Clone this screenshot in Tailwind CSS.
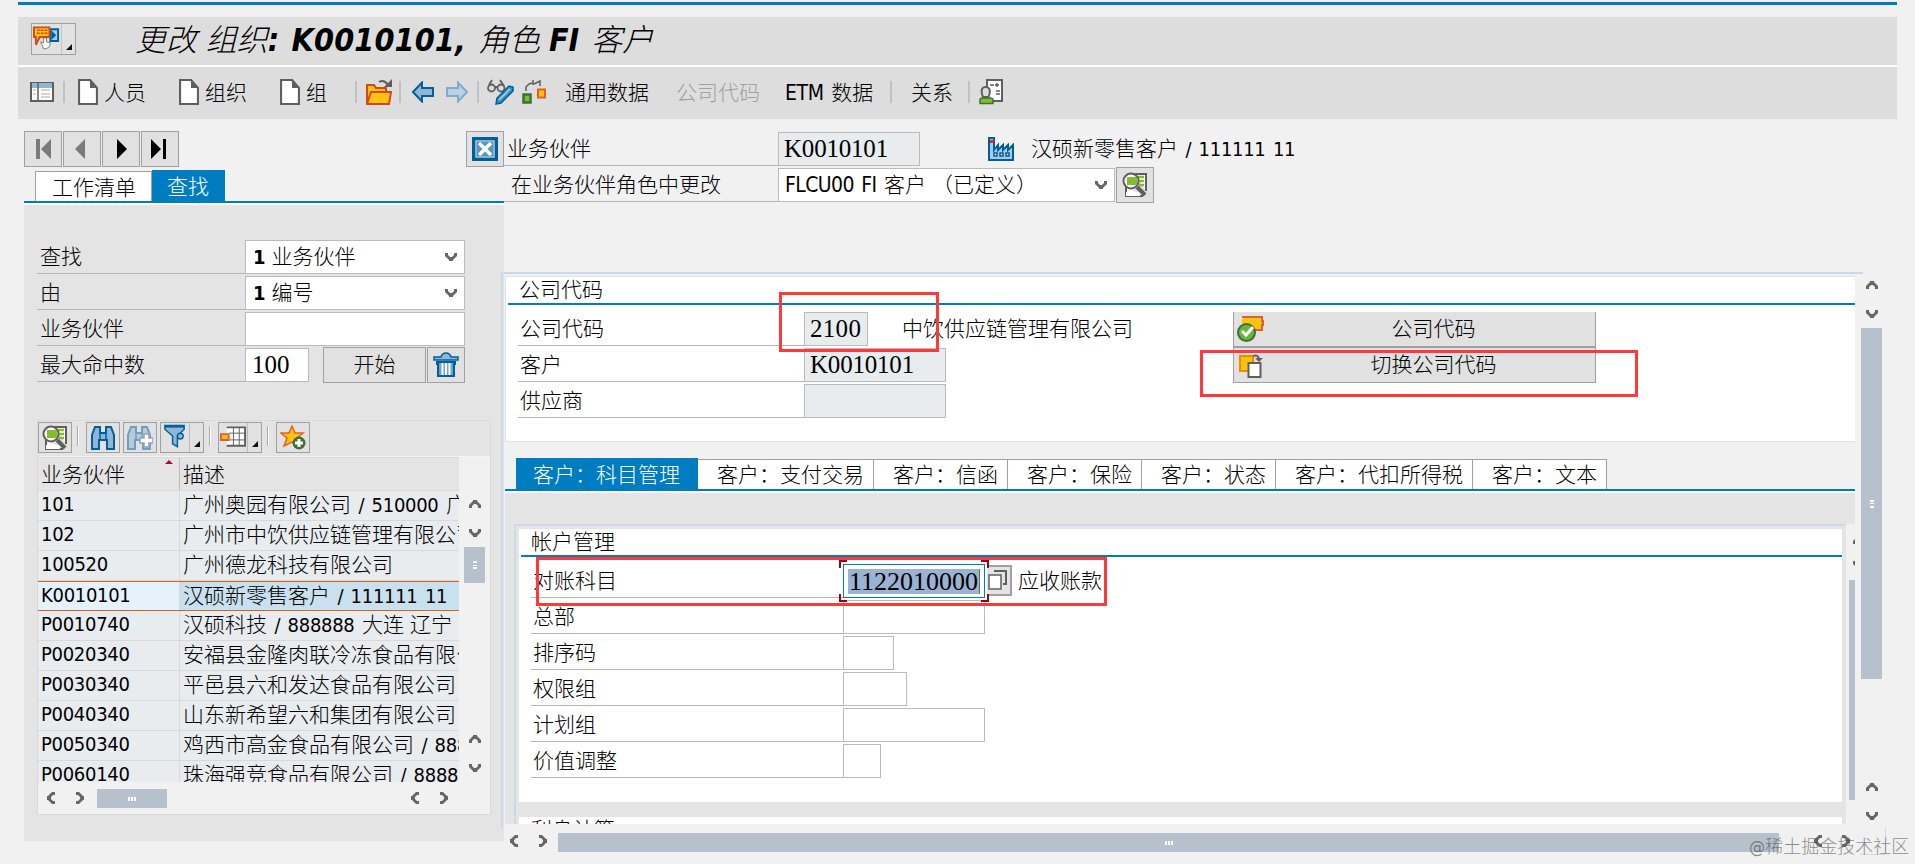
<!DOCTYPE html>
<html lang="zh-CN">
<head>
    <meta charset="UTF-8">
    <meta name="viewport" content="width=device-width, initial-scale=1.0">
    <title>更改 组织: K0010101</title>
    <script src="https://cdn.jsdelivr.net/npm/@tailwindcss/browser@4"></script>
</head>
<body class="relative w-[1915px] h-[864px] overflow-hidden bg-[#f1f1f1] text-black text-[21px] leading-none whitespace-nowrap font-light font-['DejaVu_Sans_Condensed','Noto_Sans_CJK_SC',sans-serif]">

<!-- icons -->
<svg class="hidden">
    <symbol id="up" viewBox="0 0 12 8"><path d="M0 8V5l4-4V0h4v1l4 4v3H9V6L7 4H5L3 6v2z" fill="#666"/></symbol>
    <symbol id="down" viewBox="0 0 12 8"><path d="M0 0v3l4 4v1h4V7l4-4V0H9v2L7 4H5L3 2V0z" fill="#666"/></symbol>
    <symbol id="left" viewBox="0 0 8 12"><path d="M8 0H5L1 4H0v4h1l4 4h3V9H6L4 7V5l2-2h2z" fill="#666"/></symbol>
    <symbol id="right" viewBox="0 0 8 12"><path d="M0 0h3l4 4h1v4H7l-4 4H0V9h2l2-2V5L2 3H0z" fill="#666"/></symbol>
    <symbol id="corner" viewBox="0 0 6 6"><path d="M6 0v6H0z" fill="#111"/></symbol>
    <symbol id="doc" viewBox="0 0 20 26"><path d="M1 1h11l7 8v16H1z" fill="#fff" stroke="#5f5f5f" stroke-width="2.200"/><path d="M12 1v8h7z" fill="#5f5f5f"/></symbol>
    <symbol id="detail" viewBox="0 0 26 26">
        <path d="M13 2h11v17M4 15v9h17" fill="#fff" stroke="#5f5f5f" stroke-width="2"/>
        <path d="M4 20h14v4H4z" fill="#fff"/>
        <path d="M16 5h6M17 9h5M17 13h5" stroke="#84bd2c" stroke-width="2.500"/>
        <circle cx="9" cy="9" r="7.500" fill="#fff" stroke="#5f5f5f" stroke-width="2"/>
        <path d="M5 5h10v8H5z" fill="#84bd2c"/>
        <path d="M15 15l8 8" stroke="#5f5f5f" stroke-width="4"/>
    </symbol>
    <symbol id="binoc" viewBox="0 0 24 26"><path d="M4 2h5v6h6V2h5l3 8v14h-7V15H8v9H1V10z" fill="#91b5d6" stroke="#00609a" stroke-width="2"/><path d="M9 8v7M15 8v7" stroke="#00609a" stroke-width="1.500"/></symbol>
</svg>

<div class="h-[5px] pt-0.5"><div class="ml-[18px] w-[1879px] h-[3px] bg-[#007cc0]"></div></div>

<!-- title bar -->
<div class="mt-3 ml-[18px] w-[1879px] h-12 bg-[#ddd] flex pt-1.5 pl-[13px]">
    <div class="flex w-[45px] h-8 border border-[#a0a0a0] bg-[#e1e1e1]">
        <svg class="w-[30px] h-[30px] border-r border-[#c4c4c4]" viewBox="0 0 30 30">
            <path d="M19 5h8v12h-8z" fill="#a9cae6" stroke="#005f96" stroke-width="2"/>
            <path d="M20 6l5 5-5 5z" fill="#005f96"/>
            <path d="M2 3h16v10H8l-4 8v-8H2z" fill="#ffc20e" stroke="#d4481c" stroke-width="2"/>
            <path d="M5 6h11M5 9h11" stroke="#d4481c" stroke-width="1.500" stroke-dasharray="3 1"/>
            <path d="M9 18l3 1v-5h3v4l4 1-1 4-3 2h-3z" fill="#fff" stroke="#777"/>
        </svg>
        <svg class="w-1.5 h-1.5 ml-1 mt-5"><use href="#corner"/></svg>
    </div>
    <h1 class="ml-[59px] text-[31px] leading-[34px] font-light italic">更改 组织<span class="font-bold text-[32px] tracking-[0.1px] [word-spacing:2px]">: K0010101, </span>角色 <span class="font-bold text-[32px] [word-spacing:2px]">FI </span>客户</h1>
</div>
<div class="ml-[18px] w-[1879px] h-0.5 bg-white"></div>

<!-- toolbar -->
<div class="relative ml-[18px] w-[1879px] h-[52px] bg-[#ddd] flex items-center pb-0.5 pl-3">
    <svg class="w-6 h-5" viewBox="0 0 24 20"><path d="M1 1h22v18H1z" fill="#fff" stroke="#5f5f5f" stroke-width="2"/><path d="M2 1h20v5H2z" fill="#91b5d6"/><path d="M8 1v18" stroke="#5f5f5f" stroke-width="1.500"/><path d="M3 8h3M3 12h3M11 8h9M11 12h9M11 15h9" stroke="#aaa"/></svg>
    <div class="ml-[9px] w-0.5 h-[22px] bg-[#c1c1c1]"></div>
    <svg class="ml-[13px] w-5 h-[26px]"><use href="#doc"/></svg>
    <span class="ml-1.5 mt-0.5 w-[75px]">人员</span>
    <svg class="w-5 h-[26px]"><use href="#doc"/></svg>
    <span class="ml-1.5 mt-0.5 w-[75px]">组织</span>
    <svg class="w-5 h-[26px]"><use href="#doc"/></svg>
    <span class="ml-1.5 mt-0.5 w-[49px]">组</span>
    <div class="w-0.5 h-[22px] bg-[#c1c1c1]"></div>
    <svg class="ml-[9px] w-[26px] h-[26px]" viewBox="0 0 26 26"><path d="M1 25V6h7l2 3h10v4" fill="#ffc20e" stroke="#d4481c" stroke-width="2"/><path d="M1 25l4-12h20l-2 12z" fill="#ffc20e" stroke="#d4481c" stroke-width="2"/><path d="M13 3q5-3 9 3" fill="none" stroke="#5f5f5f" stroke-width="2"/><path d="M26 0v8h-8z" fill="#5f5f5f"/></svg>
    <div class="ml-[7px] w-0.5 h-[22px] bg-[#c1c1c1]"></div>
    <svg class="ml-[11px] w-[22px] h-[22px]" viewBox="0 0 22 22"><path d="M1 11L10 1.500V7h11v8H10v5.500z" fill="#91b5d6" stroke="#00609a" stroke-width="2"/></svg>
    <svg class="ml-3 w-[22px] h-[22px]" viewBox="0 0 22 22"><path d="M21 11L12 1.500V7H1v8h11v5.500z" fill="#bcd2e4" stroke="#7eacca" stroke-width="2"/></svg>
    <div class="ml-[9px] w-0.5 h-[22px] bg-[#c1c1c1]"></div>
    <svg class="ml-2 w-[27px] h-[26px]" viewBox="0 0 27 26"><g fill="none" stroke="#5f5f5f" stroke-width="1.800"><circle cx="4.500" cy="9" r="3.500"/><circle cx="14" cy="9" r="3.500"/><path d="M2 6l3-5M13 1l4 6M8 8h3"/></g><path d="M9 25l1-6L22 7l4 1v4L14 24z" fill="#3e8cc0" stroke="#00609a" stroke-width="1.500"/><path d="M12 21L23 10" stroke="#b9d6ec" stroke-width="1.500"/></svg>
    <svg class="ml-2 w-6 h-[26px]" viewBox="0 0 24 26"><path d="M1.500 15.500h7v8h-7z" fill="#84bd2c" stroke="#3a7236" stroke-width="2.500"/><path d="M16 10.500h7v8h-7z" fill="#ffc20e" stroke="#e0622a" stroke-width="2"/><path d="M4 12V8q3-4 7-4M11 1v5M12 5l6-3v5" fill="none" stroke="#5f5f5f" stroke-width="1.500"/></svg>
    <span class="ml-[19px] mt-0.5 w-[111px]">通用数据</span>
    <span class="mt-0.5 w-[109px] text-[#a0a0a0]">公司代码</span>
    <span class="mt-0.5 w-[105px]"><span class="text-[21px] font-normal tracking-[-0.4px] [word-spacing:2px]">ETM </span>数据</span>
    <div class="w-0.5 h-[22px] bg-[#c1c1c1]"></div>
    <span class="ml-[19px] mt-0.5 w-[57px]">关系</span>
    <div class="w-0.5 h-[22px] bg-[#c1c1c1]"></div>
    <svg class="ml-[9px] w-6 h-[26px]" viewBox="0 0 24 26"><path d="M8 1h15v21H8z" fill="#fff" stroke="#5f5f5f" stroke-width="2"/><path d="M11 6h4M18 4v4M16 6h4M17 12h4M17 15h4" stroke="#5f5f5f" stroke-width="1.500"/><path d="M6.500 8c4 0 5 3 4 7l-1 3H4l-1-3c-1-4 0-7 3.500-7z" fill="#ddd" stroke="#5f5f5f" stroke-width="2"/><path d="M1 24.500V21q0-2 3-2h7q3 0 3 2v3.500z" fill="#84bd2c" stroke="#3a7236" stroke-width="1.500"/></svg>
</div>

<div class="flex">
    <!-- left pane -->
    <div class="ml-6 w-[480px] shrink-0">
        <div class="flex gap-[1px] pt-3">
            <div class="w-[38px] h-9 border border-[#a0a0a0] bg-[#e1e1e1] flex items-center justify-center"><svg class="w-[15px] h-5" viewBox="0 0 15 20"><path d="M0 0h4v20H0zM15 0v20L5 10z" fill="#7a7a7a"/></svg></div>
            <div class="w-[38px] h-9 border border-[#a0a0a0] bg-[#e1e1e1] flex items-center justify-center"><svg class="w-2.5 h-5 mr-1" viewBox="0 0 10 20"><path d="M10 0v20L0 10z" fill="#7a7a7a"/></svg></div>
            <div class="w-[38px] h-9 border border-[#a0a0a0] bg-[#e1e1e1] flex items-center justify-center"><svg class="w-2.5 h-5 ml-0.5" viewBox="0 0 10 20"><path d="M0 0v20l10-10z"/></svg></div>
            <div class="w-[38px] h-9 border border-[#a0a0a0] bg-[#e1e1e1] flex items-center justify-center"><svg class="w-[15px] h-5 mr-1" viewBox="0 0 15 20"><path d="M12 0h3v20h-3zM0 0v20l10-10z"/></svg></div>
            <div class="ml-auto w-[38px] h-9 border border-[#a0a0a0] bg-[#e1e1e1] flex items-center justify-center">
                <svg class="w-[26px] h-6" viewBox="0 0 26 24"><path d="M1.500 1.500h23v21h-23z" fill="#5c96c0" stroke="#005f96" stroke-width="3"/><path d="M4 4h18v16H4z" fill="none" stroke="#a9cae6"/><path d="M7 6l12 12M19 6L7 18" stroke="#fff" stroke-width="3.500"/></svg>
            </div>
        </div>
        <div class="flex h-9 pt-[3px] pl-[11px] border-b-2 border-[#007cc0]">
            <div class="w-[117px] mt-px border border-b-0 border-[#a0a0a0] bg-white pt-1.5 pl-4">工作清单</div>
            <div class="w-[73px] bg-[#007cc0] text-white pt-[7px] pl-[15px]">查找</div>
        </div>
        <div class="h-[638px] border-t-2 border-white bg-[#e4e4e4] pt-[35px] pl-[13px]">
            <!-- search form -->
            <div class="w-[428px] flex flex-col gap-0.5">
                <div class="flex h-[34px]">
                    <div class="w-[208px] border-b border-[#b5b5b5] pt-[7px] pl-[3px]">查找</div>
                    <div class="w-[220px] border border-[#bbb] bg-white flex items-center justify-between pl-[7px] pr-[7px]"><span><span class="text-[20px] font-bold">1</span> 业务伙伴</span><svg class="w-3 h-2"><use href="#down"/></svg></div>
                </div>
                <div class="flex h-[34px]">
                    <div class="w-[208px] border-b border-[#b5b5b5] pt-[7px] pl-[3px]">由</div>
                    <div class="w-[220px] border border-[#bbb] bg-white flex items-center justify-between pl-[7px] pr-[7px]"><span><span class="text-[20px] font-bold">1</span> 编号</span><svg class="w-3 h-2"><use href="#down"/></svg></div>
                </div>
                <div class="flex h-[34px]">
                    <div class="w-[208px] border-b border-[#b5b5b5] pt-[7px] pl-[3px]">业务伙伴</div>
                    <div class="w-[220px] border border-[#bbb] bg-white"></div>
                </div>
                <div class="flex h-[34px]">
                    <div class="w-[208px] border-b border-[#b5b5b5] pt-[7px] pl-[3px]">最大命中数</div>
                    <div class="w-16 border border-[#bbb] bg-white pl-1.5 pt-[3px] text-[25px] font-['Liberation_Serif',serif]">100</div>
                    <div class="ml-3.5 -mt-px w-[103px] h-9 border border-[#a0a0a0] bg-[#e1e1e1] flex items-center justify-center">开始</div>
                    <div class="ml-px -mt-px w-[38px] h-9 border border-[#a0a0a0] bg-[#e1e1e1] flex items-center justify-center">
                        <svg class="w-[26px] h-[26px]" viewBox="0 0 26 26"><path d="M1 8V5h7q1-4 5-4t5 4h7v3z" fill="#91b5d6" stroke="#00609a" stroke-width="1.500"/><path d="M3 9h20v4h-1v12H4V13H3z" fill="#00609a"/><path d="M6 11h14v12H6z" fill="#6fa3cb"/><path d="M9.500 11v12M13 11v12M16.500 11v12" stroke="#fff" stroke-width="2"/></svg>
                    </div>
                </div>
            </div>

            <!-- result list -->
            <div class="mt-[38px] w-[454px] h-[395px] border border-[#d9d9d9]">
                <div class="flex h-9 pt-px items-start border-b border-[#f4f4f4]">
                    <div class="w-[34px] h-[31px] border border-[#a0a0a0] bg-[#e1e1e1] flex items-center justify-center"><svg class="w-[26px] h-[26px]"><use href="#detail"/></svg></div>
                    <div class="mt-1 ml-[5px] w-0.5 h-5 border-l border-[#aaa] bg-white"></div>
                    <div class="ml-[7px] w-[34px] h-[31px] border border-[#a0a0a0] bg-[#e1e1e1] flex items-center justify-center"><svg class="w-6 h-[26px]"><use href="#binoc"/></svg></div>
                    <div class="ml-[3px] w-[34px] h-[31px] border border-[#a0a0a0] bg-[#e1e1e1] flex items-center justify-center">
                        <svg class="w-[26px] h-[26px]" viewBox="0 0 26 26"><g opacity=".5"><use href="#binoc" width="24" height="26"/></g><path d="M17 9h5v4h4v5h-4v4h-5v-4h-4v-5h4z" fill="#fff" stroke="#8ea3bd" stroke-width="1.500"/></svg>
                    </div>
                    <div class="ml-[3px] w-11 h-[31px] border border-[#a0a0a0] bg-[#e1e1e1] flex items-center">
                        <svg class="w-[29px] h-[29px] border-r border-[#bbb]" viewBox="0 0 29 29"><path d="M4 2h20v4l-7 7v11l-5-3v-8L4 6z" fill="#91b5d6" stroke="#00609a" stroke-width="1.500"/><path d="M4 3h20" stroke="#00609a" stroke-width="2.500"/><circle cx="20" cy="13" r="3" fill="#91b5d6" stroke="#00609a" stroke-width="1.500"/></svg>
                        <svg class="w-1.5 h-1.5 ml-1 mt-3"><use href="#corner"/></svg>
                    </div>
                    <div class="mt-1 ml-[5px] w-0.5 h-5 border-l border-[#aaa] bg-white"></div>
                    <div class="ml-[7px] w-11 h-[31px] border border-[#a0a0a0] bg-[#e1e1e1] flex items-center">
                        <svg class="w-[29px] h-[29px] border-r border-[#bbb]" viewBox="0 0 29 29"><path d="M8 4h19v19H8z" fill="#fff"/><path d="M8 4h19v19H8" fill="none" stroke="#5f5f5f" stroke-width="2"/><path d="M10 10h17M10 17h17M15 4v19M21 4v19" stroke="#5f5f5f" stroke-width="1"/><path d="M2 11h8v6H2z" fill="#ffc20e" stroke="#e0622a" stroke-width="2"/></svg>
                        <svg class="w-1.5 h-1.5 ml-1 mt-3"><use href="#corner"/></svg>
                    </div>
                    <div class="mt-1 ml-[5px] w-0.5 h-5 border-l border-[#aaa] bg-white"></div>
                    <div class="ml-[7px] w-[34px] h-[31px] border border-[#a0a0a0] bg-[#e1e1e1] flex items-center justify-center">
                        <svg class="w-[26px] h-[26px]" viewBox="0 0 26 26"><path d="M12 1l3 7h8l-6 5 2 8-7-4-8 4 3-8-6-5h8z" fill="#ffc20e" stroke="#e0622a" stroke-width="1.500"/><circle cx="19" cy="18" r="6.500" fill="#3a7236"/><path d="M19 14v8M15 18h8" stroke="#fff" stroke-width="3"/></svg>
                    </div>
                </div>
                <div class="flex">
                    <div class="relative w-[421px] h-[325px] overflow-hidden">
                        <div class="flex h-[34px] border-y border-[#d9d9d9]">
                            <div class="relative w-[142px] border-r border-[#bbb] pt-[7px] pl-[3px]">业务伙伴<div class="absolute right-1.5 top-0.5 w-2 h-1 bg-[#c0003c] [clip-path:polygon(50%_0,100%_100%,0_100%)]"></div></div>
                            <div class="pt-[7px] pl-[3px]">描述</div>
                        </div>
                        <div id="rows"></div>
                    </div>
                    <div class="grow flex flex-col items-center h-[325px] bg-[#f1f1f1]">
                        <svg class="w-3 h-2 mt-[43px] shrink-0"><use href="#up"/></svg>
                        <svg class="w-3 h-2 mt-[21px] shrink-0"><use href="#down"/></svg>
                        <div class="mt-2.5 w-[21px] h-9 bg-[#b7c1cb] flex items-center justify-center shrink-0"><div class="w-1 h-2 border-y-2 border-white flex items-center"><div class="w-1 h-px bg-white"></div></div></div>
                        <svg class="w-3 h-2 mt-[152px] shrink-0"><use href="#up"/></svg>
                        <svg class="w-3 h-2 mt-[21px] shrink-0"><use href="#down"/></svg>
                    </div>
                </div>
                <div class="flex items-center h-8 bg-[#f1f1f1] pl-[9px] pb-px">
                    <svg class="w-2 h-3"><use href="#left"/></svg>
                    <svg class="w-2 h-3 ml-[21px]"><use href="#right"/></svg>
                    <div class="ml-[13px] w-[70px] h-[19px] mt-0.5 bg-[#b7c1cb] flex items-center justify-center gap-px"><i class="w-0.5 h-1 bg-white"></i><i class="w-0.5 h-1 bg-white"></i><i class="w-0.5 h-1 bg-white"></i></div>
                    <svg class="w-2 h-3 ml-[244px]"><use href="#left"/></svg>
                    <svg class="w-2 h-3 ml-[21px]"><use href="#right"/></svg>
                </div>
            </div>
        </div>
    </div>

    <!-- right pane -->
    <div class="w-[1411px] shrink-0 -ml-[3px]">
        <div class="h-[153px] pt-[13px] pl-[3px]">
            <div class="flex h-[34px]">
                <div class="w-[274px] border-b border-[#b5b5b5] pt-[7px] pl-[3px]">业务伙伴</div>
                <div class="w-[142px] border border-[#bbb] bg-[#e8ecef] pl-[5px] pt-[3px] text-[25px] tracking-[-0.2px] font-['Liberation_Serif',serif]">K0010101</div>
                <svg class="ml-[68px] mt-[5px] w-[27px] h-6" viewBox="0 0 27 24"><path d="M1 23V1h5v12l4-5v5l5-5v5l5-5v5l5-5v15z" fill="#a9cae6" stroke="#005f96" stroke-width="2"/><path d="M2 3h4v3H2z" fill="#e22"/><path d="M6 16h3v3H6zM12 16h3v3h-3zM18 16h3v3h-3z" fill="#fff" stroke="#005f96" stroke-width="1.500"/></svg>
                <div class="ml-4 pt-[7px]">汉硕新零售客户<span class="text-[20px] font-normal tracking-[-0.3px] [word-spacing:2px]"> / 111111 11</span></div>
            </div>
            <div class="flex h-[34px] mt-0.5">
                <div class="w-[274px] border-b border-[#b5b5b5] pt-[7px] pl-[7px]">在业务伙伴角色中更改</div>
                <div class="w-[337px] border border-[#bbb] bg-white flex items-center justify-between pl-1.5 pr-[7px]"><span><span class="text-[21px] font-normal tracking-[-0.6px] [word-spacing:2px]">FLCU00 FI </span>客户 （已定义）</span><svg class="w-3 h-2"><use href="#down"/></svg></div>
                <div class="ml-px -mt-px w-[38px] h-9 border border-[#a0a0a0] bg-[#e1e1e1] flex items-center justify-center"><svg class="w-[26px] h-[26px]"><use href="#detail"/></svg></div>
            </div>
        </div>

        <div class="flex">
            <div class="w-[1362px] h-[556px] border-t-2 border-l-2 border-[#cbdaea] pt-0.5 pl-0.5">
                <div class="w-[1350px] h-[166px] bg-white border border-[#e2e2e2] border-r-0">
                    <div class="ml-0.5 h-7 pl-[11px] pt-[3px] border-b-2 border-[#007cc0]">公司代码</div>
                    <div class="flex pl-3 pt-[7px]">
                        <div class="w-[712px] flex flex-col gap-0.5">
                            <div class="flex h-[34px]">
                                <div class="w-[286px] border-b border-[#b5b5b5] pt-[7px] pl-0.5">公司代码</div>
                                <div class="w-16 border border-[#bbb] bg-[#e8ecef] pl-[5px] pt-[3px] text-[25px] tracking-[0.3px] font-['Liberation_Serif',serif]">2100</div>
                                <div class="pt-[7px] ml-[34px]">中饮供应链管理有限公司</div>
                            </div>
                            <div class="flex h-[34px]">
                                <div class="w-[286px] border-b border-[#b5b5b5] pt-[7px] pl-0.5">客户</div>
                                <div class="w-[142px] border border-[#bbb] bg-[#e8ecef] pl-[5px] pt-[3px] text-[25px] tracking-[-0.2px] font-['Liberation_Serif',serif]">K0010101</div>
                            </div>
                            <div class="flex h-[34px]">
                                <div class="w-[286px] border-b border-[#b5b5b5] pt-[7px] pl-0.5">供应商</div>
                                <div class="w-[142px] border border-[#bbb] bg-[#e8ecef]"></div>
                            </div>
                        </div>
                        <div class="ml-[3px] w-[363px] h-[71px] border border-t-0 border-[#a0a0a0] bg-[#e1e1e1]">
                            <div class="relative flex h-9 items-center justify-center pl-[38px] border-b-2 border-[#a0a0a0]">
                                <svg class="absolute left-[3px] top-1 w-[27px] h-[26px]" viewBox="0 0 27 26"><path d="M5 1h20v4h1v4h-1v5h-9" fill="#ffc20e" stroke="#e0622a" stroke-width="2"/><path d="M5 3h19v10H5z" fill="#ffc20e"/><ellipse cx="9.500" cy="16.500" rx="8.500" ry="8.500" fill="#6db33f" stroke="#3a7236" stroke-width="2"/><path d="M5 15l4 4 7-8" fill="none" stroke="#fff" stroke-width="3"/></svg>
                                公司代码
                            </div>
                            <div class="relative flex h-[34px] items-center justify-center pl-[38px]">
                                <svg class="absolute left-[5px] top-1.5 w-6 h-6" viewBox="0 0 24 24"><path d="M1 2h13v15H1z" fill="#ffc20e" stroke="#f08a00" stroke-width="2"/><path d="M14 2q6-2 6 4" fill="none" stroke="#5f5f5f" stroke-width="2"/><path d="M16 4h8l-4 4z" fill="#5f5f5f"/><path d="M9.500 9h12v14h-12z" fill="#fff" stroke="#5f5f5f" stroke-width="2"/></svg>
                                切换公司代码
                            </div>
                        </div>
                    </div>
                </div>

                <!-- customer tabs -->
                <div class="mt-4 w-[1350px] h-[33px] flex pl-[11px] border-b-2 border-[#007cc0] bg-[#f1f1f1]">
                    <div class="w-[182px] bg-[#007cc0] text-white pt-[7px] pl-[17px]">客户：科目管理</div>
                    <div class="w-[176px] mt-px border-t border-r border-[#a0a0a0] bg-white pt-[5px] pl-[19px]">客户：支付交易</div>
                    <div class="w-[134px] mt-px border-t border-r border-[#a0a0a0] bg-white pt-[5px] pl-[19px]">客户：信函</div>
                    <div class="w-[134px] mt-px border-t border-r border-[#a0a0a0] bg-white pt-[5px] pl-[19px]">客户：保险</div>
                    <div class="w-[134px] mt-px border-t border-r border-[#a0a0a0] bg-white pt-[5px] pl-[19px]">客户：状态</div>
                    <div class="w-[197px] mt-px border-t border-r border-[#a0a0a0] bg-white pt-[5px] pl-[19px]">客户：代扣所得税</div>
                    <div class="w-[134px] mt-px border-t border-r border-[#a0a0a0] bg-white pt-[5px] pl-[19px]">客户：文本</div>
                </div>
                <div class="w-[1350px] h-[33px] border-t-2 border-white bg-[#e4e4e4]"></div>
                <div class="flex w-[1350px] h-[300px] overflow-hidden">
                    <div class="w-[1341px] shrink-0 bg-[#e4e4e4] pl-[9px]">
                        <div class="w-[1332px] h-[300px] border-t-2 border-l-2 border-[#cbdaea] pt-[3px] pl-[3px]">
                            <div class="w-[1323px] h-[273px] bg-white">
                                <div class="ml-0.5 h-7 pl-2.5 pt-[3px] border-b-2 border-[#007cc0]">帐户管理</div>
                                <div class="flex flex-col gap-0.5 pl-3 pt-[7px]">
                                    <div class="flex h-[34px]">
                                        <div class="w-[312px] border-b border-[#b5b5b5] pt-[7px] pl-0.5">对账科目</div>
                                        <div class="relative w-[142px] border border-[#007cc0] bg-white p-1">
                                            <div class="h-[25px] w-[132px] bg-[#9bb3d3] border-r border-[#7a6a30] text-[26px] leading-[25px] pl-px font-['Liberation_Serif',serif]">1122010000</div>
                                            <i class="absolute -left-[5px] -top-[5px] w-2 h-2 border-t-2 border-l-2 border-[#a00010]"></i>
                                            <i class="absolute -right-[5px] -top-[5px] w-2 h-2 border-t-2 border-r-2 border-[#a00010]"></i>
                                            <i class="absolute -left-[5px] -bottom-[5px] w-2 h-2 border-b-2 border-l-2 border-[#a00010]"></i>
                                            <i class="absolute -right-[5px] -bottom-[5px] w-2 h-2 border-b-2 border-r-2 border-[#a00010]"></i>
                                        </div>
                                        <div class="mt-px ml-0.5 w-[25px] h-[31px] border-2 border-l-0 border-[#a0a0a0] bg-[#e4e4e4]">
                                            <svg class="w-[22px] h-[26px]" viewBox="0 0 22 26"><path d="M7 4h12v13h-3" fill="none" stroke="#5f5f5f" stroke-width="2"/><path d="M2 8h12v14H2z" fill="#fff" stroke="#5f5f5f" stroke-width="1.500"/></svg>
                                        </div>
                                        <div class="ml-[6px] pt-[7px]">应收账款</div>
                                    </div>
                                    <div class="flex h-[34px]"><div class="w-[312px] border-b border-[#b5b5b5] pt-[7px] pl-0.5">总部</div><div class="w-[142px] border border-[#bbb]"></div></div>
                                    <div class="flex h-[34px]"><div class="w-[312px] border-b border-[#b5b5b5] pt-[7px] pl-0.5">排序码</div><div class="w-[51px] border border-[#bbb]"></div></div>
                                    <div class="flex h-[34px]"><div class="w-[312px] border-b border-[#b5b5b5] pt-[7px] pl-0.5">权限组</div><div class="w-16 border border-[#bbb]"></div></div>
                                    <div class="flex h-[34px]"><div class="w-[312px] border-b border-[#b5b5b5] pt-[7px] pl-0.5">计划组</div><div class="w-[142px] border border-[#bbb]"></div></div>
                                    <div class="flex h-[34px]"><div class="w-[312px] border-b border-[#b5b5b5] pt-[7px] pl-0.5">价值调整</div><div class="w-[38px] border border-[#bbb]"></div></div>
                                </div>
                            </div>
                            <div class="mt-[15px] w-[1323px] h-[7px] overflow-hidden bg-white pl-3 pt-[3px]">利息计算</div>
                        </div>
                    </div>
                    <!-- inner scrollbar, cut off by the tab strip's edge -->
                    <div class="w-[9px] overflow-hidden bg-[#f1f1f1] pl-[3px]">
                        <svg class="mt-3 ml-1 w-3 h-2"><use href="#up"/></svg>
                        <svg class="mt-[17px] ml-1 w-3 h-2"><use href="#down"/></svg>
                        <div class="mt-[11px] h-[220px] bg-[#b7c1cb]"></div>
                    </div>
                </div>
            </div>
            <div class="-ml-[2px] w-[21px] flex flex-col items-center pt-[9px]">
                <svg class="w-3 h-2"><use href="#up"/></svg>
                <svg class="w-3 h-2 mt-[21px]"><use href="#down"/></svg>
                <div class="mt-2.5 w-[21px] h-[351px] bg-[#b7c1cb] flex items-center justify-center"><div class="w-1 h-2 border-y-2 border-white flex items-center"><div class="w-1 h-px bg-white"></div></div></div>
                <svg class="w-3 h-2 mt-[104px]"><use href="#up"/></svg>
                <svg class="w-3 h-2 mt-[21px]"><use href="#down"/></svg>
            </div>
        </div>
        <div class="flex items-start pt-[5px] pl-[9px]">
            <svg class="w-2 h-3 mt-0.5"><use href="#left"/></svg>
            <svg class="w-2 h-3 mt-0.5 ml-[21px]"><use href="#right"/></svg>
            <div class="ml-[11px] w-[1221px] h-[19px] bg-[#b7c1cb] flex items-center justify-center gap-px"><i class="w-0.5 h-1 bg-white"></i><i class="w-0.5 h-1 bg-white"></i><i class="w-0.5 h-1 bg-white"></i></div>
            <svg class="w-2 h-3 mt-0.5 ml-[35px]"><use href="#left"/></svg>
            <svg class="w-2 h-3 mt-0.5 ml-5"><use href="#right"/></svg>
        </div>
    </div>
</div>

<!-- red marks over the form -->
<div class="absolute left-[779px] top-[292px] w-40 h-[60px] border-3 border-[#ff3838]"></div>
<div class="absolute left-[1200px] top-[350px] w-[438px] h-[47px] border-3 border-[#ff3838]"></div>
<div class="absolute left-[536px] top-[557px] w-[571px] h-[49px] border-3 border-[#ff3838]"></div>

<div class="absolute left-[1860px] top-[828px] w-[26px] h-[27px] border-r border-b border-[#cbdaea]"></div>
<div class="absolute left-[1749px] top-[838px] text-[18px] text-[#444]/60">@稀土掘金技术社区</div>

<script>
    // n() wraps digits, which are set a little smaller than the Chinese text
    const n = (s) => `<span class="text-[20px] font-normal tracking-[-0.3px] [word-spacing:2px]">${s}</span>`;
    const rows = [
        ['101', '广州奥园有限公司' + n(' / 510000 ') + '广州'],
        ['102', '广州市中饮供应链管理有限公司'],
        ['100520', '广州德龙科技有限公司'],
        ['K0010101', '汉硕新零售客户' + n(' / 111111 11')],
        ['P0010740', '汉硕科技' + n(' / 888888 ') + '大连 辽宁'],
        ['P0020340', '安福县金隆肉联冷冻食品有限公司'],
        ['P0030340', '平邑县六和发达食品有限公司'],
        ['P0040340', '山东新希望六和集团有限公司'],
        ['P0050340', '鸡西市高金食品有限公司' + n(' / 888888')],
        ['P0060140', '珠海强竞食品有限公司' + n(' / 888888')],
    ];
    document.getElementById('rows').innerHTML = rows.map(([id, text]) => {
        const sel = id === 'K0010101';
        return `<div class="flex ${sel ? 'h-[30px] border-y border-[#d4641e]' : 'h-[30px] border-b border-[#d9d9d9] bg-[#e8ecef]'}">
            <div class="w-[142px] shrink-0 border-r border-[#d9d9d9] pt-[3px] pl-[3px] ${sel ? 'bg-[#e5f2fb]' : ''}">${n(id)}</div>
            <div class="w-[279px] overflow-hidden pt-1 pl-[3px] ${sel ? 'bg-[#c9e0ee]' : ''}">${text}</div>
        </div>`;
    }).join('');
</script>
</body>
</html>
